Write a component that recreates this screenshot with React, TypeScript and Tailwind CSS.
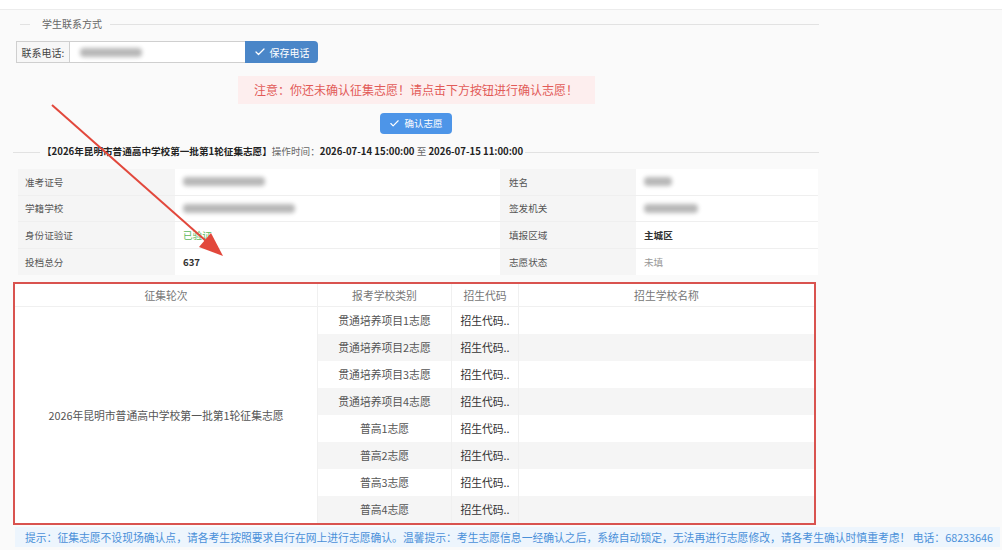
import { Check } from "lucide-react";

const info = [
  { l1: "准考证号", v1: <Blur w={82} />, l2: "姓名", v2: <Blur w={28} /> },
  { l1: "学籍学校", v1: <Blur w={112} />, l2: "签发机关", v2: <Blur w={54} /> },
  {
    l1: "身份证验证",
    v1: <span className="text-[#5cb85c]">已验证</span>,
    l2: "填报区域",
    v2: <span className="font-bold text-[#333]">主城区</span>,
  },
  {
    l1: "投档总分",
    v1: <span className="font-bold text-[#333]">637</span>,
    l2: "志愿状态",
    v2: <span className="text-[#999]">未填</span>,
  },
];

const wishes = [
  "贯通培养项目1志愿",
  "贯通培养项目2志愿",
  "贯通培养项目3志愿",
  "贯通培养项目4志愿",
  "普高1志愿",
  "普高2志愿",
  "普高3志愿",
  "普高4志愿",
];

function Blur({ w }: { w: number }) {
  return (
    <span
      className="inline-block h-[9px] bg-[#b8b8b8] blur-[2px] rounded-sm"
      style={{ width: w }}
    />
  );
}

export default function App() {
  return (
    <div className="relative w-[1002px] h-[550px] overflow-hidden bg-[#fafafa] text-[#555] font-['Noto_Sans_CJK_SC',sans-serif]">
      <div className="h-[10px] bg-white border-b border-[#ececec]" />

      <div className="w-[806px] ml-[13px]">
        {/* legend */}
        <div className="flex items-center h-[26px] mt-[1px]">
          <div className="w-[10px] ml-[7px] border-t border-[#e2e2e2]" />
          <span className="pl-[12px] pr-[8px] text-[10px] leading-none text-[#666]">学生联系方式</span>
          <div className="flex-1 border-t border-[#e2e2e2]" />
        </div>

        {/* phone input group */}
        <div className="flex h-[22px] mt-[4px] ml-[3px] text-[10px]">
          <div className="w-[54px] flex items-center justify-center bg-[#f7f7f7] border border-[#cfcfcf] text-[#444]">
            联系电话:
          </div>
          <div className="w-[175px] flex items-center px-[10px] bg-white border-y border-[#cfcfcf]">
            <Blur w={62} />
          </div>
          <button className="w-[73px] flex items-center justify-center gap-[4px] bg-[#4a86c8] text-white rounded-r-sm">
            <Check size={12} strokeWidth={2.5} />
            保存电话
          </button>
        </div>

        {/* notice */}
        <div className="flex justify-center mt-[13px]">
          <div className="w-[357px] h-[28px] flex items-center justify-center bg-[#fdeeee] text-[#e25a58] text-[12px]">
            注意：你还未确认征集志愿！请点击下方按钮进行确认志愿！
          </div>
        </div>

        <div className="flex justify-center mt-[9px]">
          <button className="w-[72px] h-[21px] flex items-center justify-center gap-[4px] bg-[#4d95e8] text-white text-[9.5px] rounded-sm">
            <Check size={11} strokeWidth={2.5} />
            确认志愿
          </button>
        </div>

        {/* title */}
        <div className="flex items-center h-[14px] mt-[11px]">
          <div className="w-[27px] border-t border-[#e2e2e2]" />
          <span className="px-[2px] text-[9.6px] leading-none text-[#222] whitespace-nowrap">
            <b>【2026年昆明市普通高中学校第一批第1轮征集志愿】</b>
            <span className="text-[#666]">操作时间：</span>
            <b>2026-07-14 15:00:00</b>
            <span className="text-[#666]"> 至 </span>
            <b>2026-07-15 11:00:00</b>
          </span>
          <div className="flex-1 border-t border-[#e2e2e2]" />
        </div>

        {/* info table */}
        <div className="ml-[5px] mt-[10px] w-[800px] text-[9.6px]">
          {info.map((r, i) => (
            <div key={i} className="flex h-[26.5px] border-b border-[#efefef] last:border-b-0">
              <div className="w-[157px] flex items-center pl-[7px] bg-[#f5f5f5] text-[#555]">{r.l1}</div>
              <div className="w-[325px] flex items-center pl-[8px] bg-white">{r.v1}</div>
              <div className="w-[136px] flex items-center pl-[9px] bg-[#f5f5f5] text-[#555]">{r.l2}</div>
              <div className="w-[182px] flex items-center pl-[8px] bg-white">{r.v2}</div>
            </div>
          ))}
        </div>

        {/* wishes table */}
        <div className="mt-[7px] w-[803px] border-2 border-[#d9534f] bg-white text-[10.8px]">
          <div className="grid grid-cols-[302px_134px_67px_296px]">
            <div className="h-[23px] flex items-center justify-center text-[#777] border-b border-[#f0f0f0]">征集轮次</div>
            <div className="h-[23px] flex items-center justify-center text-[#777] border-b border-l border-[#f0f0f0]">报考学校类别</div>
            <div className="h-[23px] flex items-center justify-center text-[#777] border-b border-l border-[#f0f0f0]">招生代码</div>
            <div className="h-[23px] flex items-center justify-center text-[#777] border-b border-l border-[#f0f0f0]">招生学校名称</div>

            <div className="row-span-8 flex items-center justify-center text-[#555] bg-white">
              2026年昆明市普通高中学校第一批第1轮征集志愿
            </div>
            {wishes.map((w, i) => {
              const bg = i % 2 === 1 ? "bg-[#f5f5f5]" : "bg-white";
              return (
                <div key={w} className="contents">
                  <div className={`h-[27px] flex items-center justify-center text-[#555] border-l border-[#f0f0f0] ${bg}`}>{w}</div>
                  <div className={`h-[27px] flex items-center justify-center text-[#333] border-l border-[#f0f0f0] ${bg}`}>招生代码..</div>
                  <div className={`h-[27px] border-l border-[#f0f0f0] ${bg}`} />
                </div>
              );
            })}
          </div>
        </div>
      </div>

      {/* hint bar */}
      <div className="ml-[15px] mr-[2px] mt-[2px] h-[20px] flex items-center pl-[10px] bg-[#edf5fd] text-[#4a90d9] text-[10.8px] whitespace-nowrap">
        提示：征集志愿不设现场确认点，请各考生按照要求自行在网上进行志愿确认。温馨提示：考生志愿信息一经确认之后，系统自动锁定，无法再进行志愿修改，请各考生确认时慎重考虑！ 电话：68233646
      </div>

      {/* annotation arrow */}
      <svg className="absolute left-0 top-0 pointer-events-none" width="1002" height="550">
        <line x1="52" y1="105" x2="206" y2="241" stroke="#e2483c" strokeWidth="2" />
        <polygon points="223,256 199,247 211,233" fill="#e2483c" />
      </svg>
    </div>
  );
}
